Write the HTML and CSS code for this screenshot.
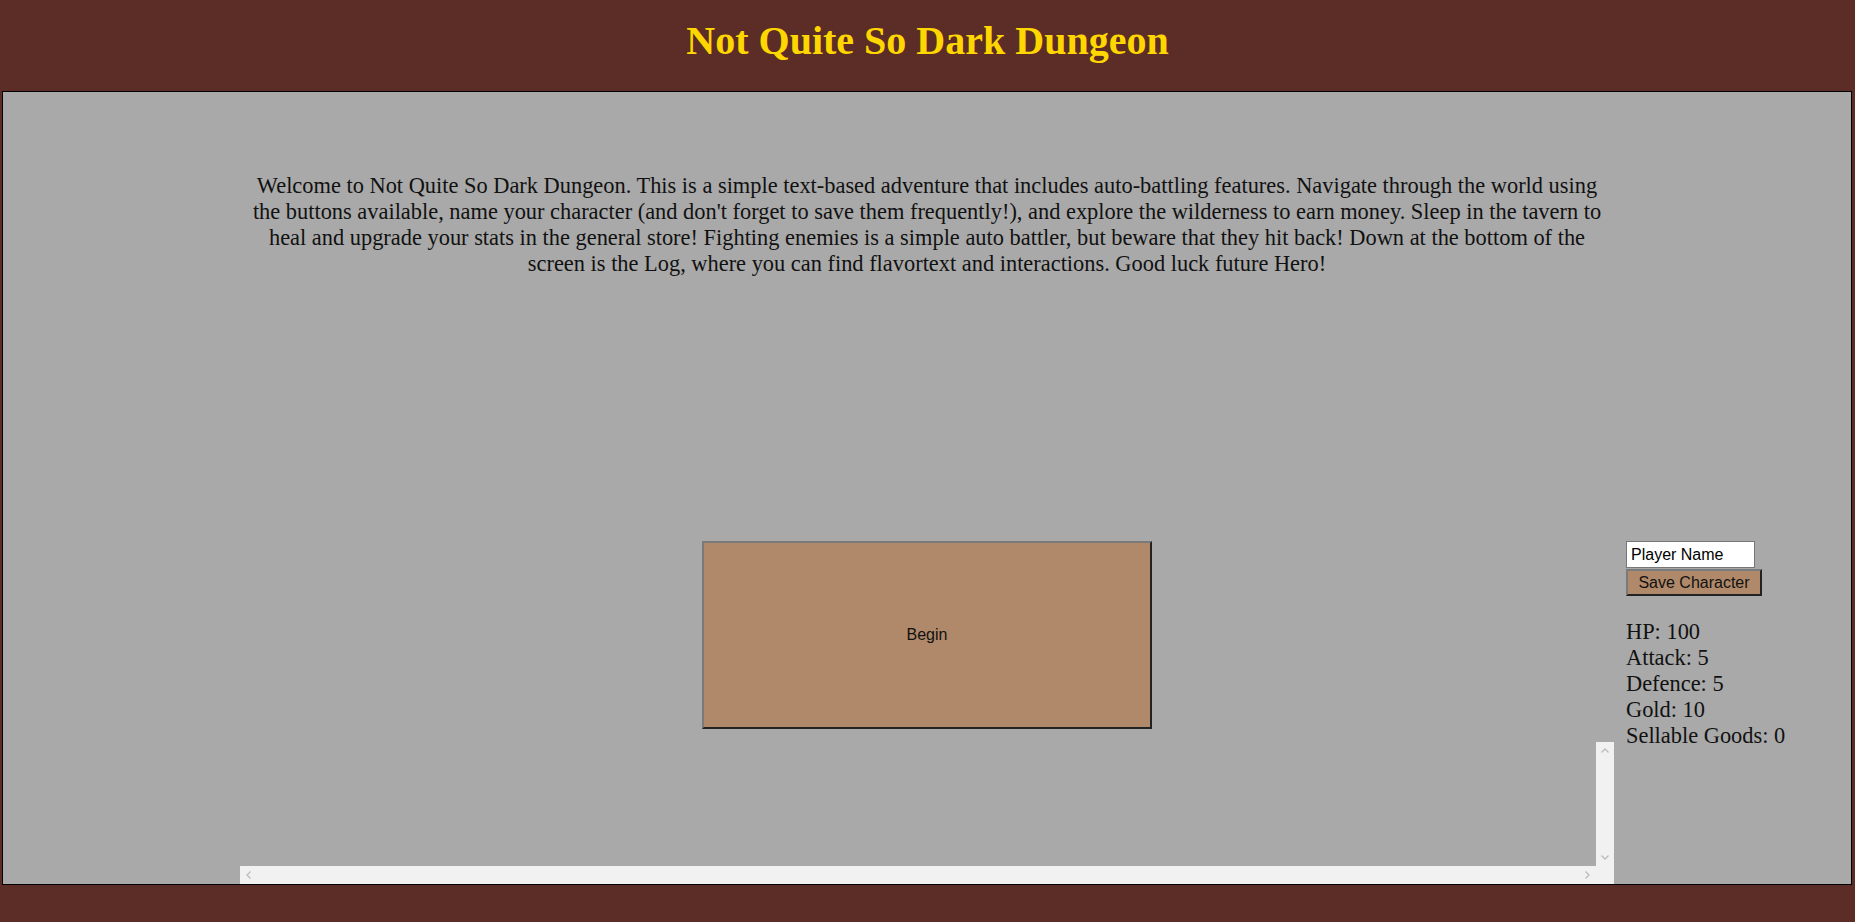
FILE: index.html
```html
<!DOCTYPE html>
<html lang="en">
<head>
<meta charset="utf-8">
<title>Not Quite So Dark Dungeon</title>
<link rel="stylesheet" href="styles.css">
</head>
<body>
<header class="top">
  <h1 class="title">Not Quite So Dark Dungeon</h1>
</header>
<main class="board">
  <div class="side"></div>
  <section class="center">
    <p class="intro">Welcome to Not Quite So Dark Dungeon. This is a simple text-based adventure that includes auto-battling features. Navigate through the world using the buttons available, name your character (and don't forget to save them frequently!), and explore the wilderness to earn money. Sleep in the tavern to heal and upgrade your stats in the general store! Fighting enemies is a simple auto battler, but beware that they hit back! Down at the bottom of the screen is the Log, where you can find flavortext and interactions. Good luck future Hero!</p>
    <div class="stage">
      <button class="begin" type="button">Begin</button>
    </div>
    <div class="log">
      <div class="log-body"></div>
      <div class="vbar">
        <svg class="chev" width="18" height="18" viewBox="0 0 18 18"><path d="M5.5 10.5 L9 7 L12.5 10.5" fill="none" stroke="#bdbdbd" stroke-width="1.4"/></svg>
        <svg class="chev" width="18" height="18" viewBox="0 0 18 18"><path d="M5.5 7.5 L9 11 L12.5 7.5" fill="none" stroke="#bdbdbd" stroke-width="1.4"/></svg>
      </div>
      <div class="hbar">
        <svg class="chev" width="18" height="18" viewBox="0 0 18 18"><path d="M10.5 5.5 L7 9 L10.5 12.5" fill="none" stroke="#bdbdbd" stroke-width="1.4"/></svg>
        <svg class="chev" width="18" height="18" viewBox="0 0 18 18"><path d="M7.5 5.5 L11 9 L7.5 12.5" fill="none" stroke="#bdbdbd" stroke-width="1.4"/></svg>
      </div>
      <div class="corner"></div>
    </div>
  </section>
  <aside class="panel">
    <input class="name" type="text" value="Player Name">
    <button class="save" type="button">Save Character</button>
    <p class="stats">HP: 100<br>Attack: 5<br>Defence: 5<br>Gold: 10<br>Sellable Goods: 0</p>
  </aside>
</main>
</body>
</html>
```
FILE: styles.css
```css
html, body {
  margin: 0;
  padding: 0;
}
body {
  background: #5c2d26;
  font-family: "Liberation Serif", "Times New Roman", serif;
  color: #111;
  height: 922px;
  overflow: hidden;
}
.top {
  height: 91px;
  box-sizing: border-box;
  padding-top: 17px;
}
.title {
  margin: 0;
  text-align: center;
  font-size: 40px;
  font-weight: bold;
  color: #ffd700;
}
.board {
  margin: 0 3px 0 2px;
  border: 1px solid #000;
  background: #a9a9a9;
  display: grid;
  grid-template-columns: 237px 1374px 1fr;
}
.center {
  display: flex;
  flex-direction: column;
}
.intro {
  margin: 81px 0 0;
  padding: 0 12px;
  font-size: 22.4px;
  text-align: center;
}
.stage {
  margin-top: 264px;
  display: flex;
  justify-content: center;
}
.begin {
  width: 450px;
  height: 188px;
  background: #b0896a;
  border-style: solid;
  border-width: 2px;
  border-color: #7a7a7a #222 #222 #7a7a7a;
  font-family: "Liberation Sans", Arial, sans-serif;
  font-size: 16px;
  color: #111;
  padding: 0;
}
.log {
  margin-top: 13px;
  height: 142px;
  display: grid;
  grid-template-columns: 1fr 18px;
  grid-template-rows: 1fr 18px;
}
.log-body {
  overflow: hidden;
}
.vbar, .hbar, .corner {
  background: #f1f1f1;
}
.vbar {
  display: flex;
  flex-direction: column;
  justify-content: space-between;
}
.hbar {
  display: flex;
  justify-content: space-between;
}
.chev {
  display: block;
}
.panel {
  padding: 449px 0 0 12px;
}
.name {
  display: block;
  box-sizing: border-box;
  width: 129px;
  height: 27px;
  margin: 0;
  padding: 1px 4px;
  border: 1px solid #767676;
  background: #fff;
  font-family: "Liberation Sans", Arial, sans-serif;
  font-size: 16px;
  color: #000;
}
.save {
  display: block;
  box-sizing: border-box;
  width: 136px;
  height: 27px;
  margin: 1px 0 0;
  padding: 0;
  background: #b0896a;
  border-style: solid;
  border-width: 2px;
  border-color: #7a7a7a #222 #222 #7a7a7a;
  font-family: "Liberation Sans", Arial, sans-serif;
  font-size: 16px;
  color: #111;
}
.stats {
  margin: 23px 0 0;
  font-size: 22.4px;
}
```
